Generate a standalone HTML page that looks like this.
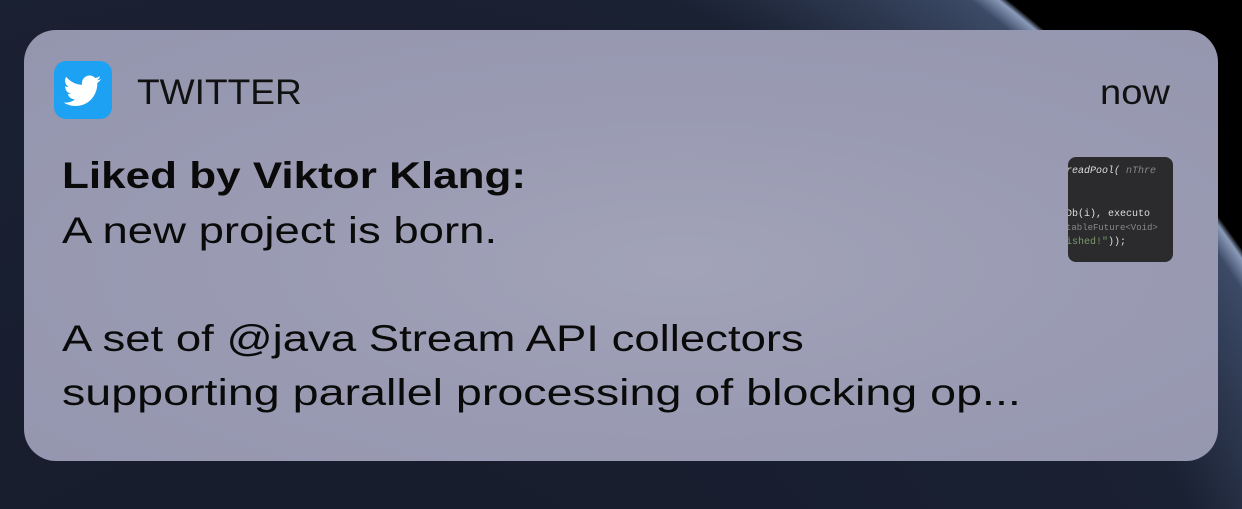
<!DOCTYPE html>
<html><head><style>
html,body{margin:0;padding:0;width:1242px;height:509px;overflow:hidden;background:#000;font-family:"Liberation Sans",sans-serif;}
.bg{position:absolute;left:0;top:0;width:1242px;height:509px;background:radial-gradient(circle 1145px at 300px 900px,#151a28 0%,#1a2133 85%,#3c4a66 98%,#8a9ab8 99.5%,#000 100%);}
.card{position:absolute;left:24px;top:30px;width:1194px;height:431px;border-radius:32px;background:radial-gradient(ellipse at 55% 55%,#a2a3b8 0%,#9a9bb3 45%,#9495ae 100%);}
.icon{position:absolute;left:54px;top:61px;width:58px;height:58px;border-radius:12px;background:#1da1f2;}
.t{position:absolute;color:#0a0a0a;white-space:nowrap;transform-origin:left top;}
.thumb{position:absolute;left:1068px;top:157px;width:105px;height:105px;border-radius:8px;background:#2b2b2e;overflow:hidden;font-family:"Liberation Mono",monospace;font-size:10px;}
</style></head><body>
<div class="bg"></div>
<div class="card"></div>
<div class="icon"><svg width="58" height="58" viewBox="0 0 24 24"><path fill="#fff" transform="translate(4.2 4.5) scale(0.65)" d="M23.6 4.6c-.9.4-1.8.6-2.8.8 1-.6 1.8-1.6 2.1-2.7-.9.6-2 1-3.1 1.2-.9-1-2.2-1.6-3.6-1.6-2.7 0-4.9 2.2-4.9 4.9 0 .4 0 .8.1 1.1C7.4 8.1 3.7 6.1 1.3 3.1.8 3.9.6 4.7.6 5.6c0 1.7.9 3.2 2.2 4.1-.8 0-1.6-.2-2.200-.6v.1c0 2.4 1.7 4.4 3.9 4.8-.4.1-.8.2-1.3.2-.3 0-.6 0-.9-.1.6 2 2.4 3.4 4.6 3.4-1.7 1.3-3.8 2.1-6.1 2.1-.4 0-.8 0-1.2-.1 2.2 1.4 4.8 2.2 7.5 2.2 9.1 0 14-7.5 14-14v-.6c1-.7 1.8-1.6 2.5-2.5z"/></svg></div>
<div class="t" style="left:137px;top:73px;font-size:35px;color:#111;transform:scaleX(1.06);">TWITTER</div>
<div class="t" style="left:1100px;top:73px;font-size:35px;color:#111;transform:scaleX(1.09);">now</div>
<div class="t" style="left:62px;top:155px;font-size:37px;font-weight:bold;transform:scaleX(1.19);">Liked by Viktor Klang:</div>
<div class="t" style="left:62px;top:210px;font-size:37px;transform:scaleX(1.23);">A new project is born.</div>
<div class="t" style="left:62px;top:318px;font-size:37px;transform:scaleX(1.23);">A set of @java Stream API collectors</div>
<div class="t" style="left:62px;top:372px;font-size:37px;transform:scaleX(1.26);">supporting parallel processing of blocking op...</div>
<div class="thumb">
<div style="position:absolute;left:-2px;top:9px;color:#ddd;font-style:italic;">readPool( <span style="color:#888">nThre</span></div>
<div style="position:absolute;left:-2px;top:52px;color:#ddd;">Db(i), <span>executo</span></div>
<div style="position:absolute;left:-2px;top:66px;color:#888;font-size:9px;">tableFuture&lt;Void&gt;</div>
<div style="position:absolute;left:-2px;top:80px;color:#7a9a6a;">ished!"<span style="color:#ddd">));</span></div>
</div>
</body></html>
